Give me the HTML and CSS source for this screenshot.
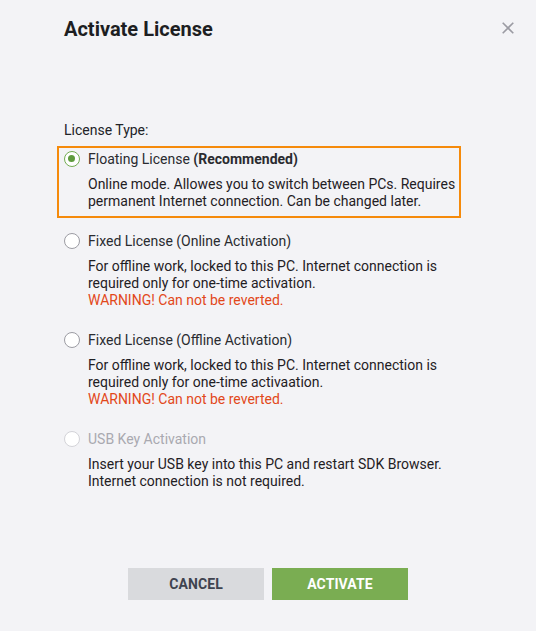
FILE: index.html
```html
<!DOCTYPE html>
<html>
<head>
<meta charset="utf-8">
<link rel="stylesheet" href="styles.css">
</head>
<body>
<div class="dialog">
  <div class="header">
    <h1 class="title">Activate License</h1>
    <button class="close" aria-label="Close">
      <svg width="12" height="12" viewBox="0 0 12 12"><path d="M0.7 0.7L11.3 11.3M11.3 0.7L0.7 11.3" stroke="#9b9ba3" stroke-width="1.6" fill="none"/></svg>
    </button>
  </div>
  <div class="content">
    <div class="type-label">License Type:</div>
    <div class="option selected">
      <div class="opt-row"><span class="radio checked"></span><span class="opt-label">Floating License <b>(Recommended)</b></span></div>
      <div class="opt-desc">Online mode. Allowes you to switch between PCs. Requires<br>permanent Internet connection. Can be changed later.</div>
    </div>
    <div class="option">
      <div class="opt-row"><span class="radio"></span><span class="opt-label">Fixed License (Online Activation)</span></div>
      <div class="opt-desc">For offline work, locked to this PC. Internet connection is<br>required only for one-time activation.<br><span class="warn">WARNING! Can not be reverted.</span></div>
    </div>
    <div class="option">
      <div class="opt-row"><span class="radio"></span><span class="opt-label">Fixed License (Offline Activation)</span></div>
      <div class="opt-desc">For offline work, locked to this PC. Internet connection is<br>required only for one-time activaation.<br><span class="warn">WARNING! Can not be reverted.</span></div>
    </div>
    <div class="option disabled">
      <div class="opt-row"><span class="radio"></span><span class="opt-label">USB Key Activation</span></div>
      <div class="opt-desc">Insert your USB key into this PC and restart SDK Browser.<br>Internet connection is not required.</div>
    </div>
  </div>
  <div class="actions">
    <button class="btn btn-cancel">CANCEL</button>
    <button class="btn btn-activate">ACTIVATE</button>
  </div>
</div>
</body>
</html>
```
FILE: styles.css
```css
html, body {
  margin: 0;
  padding: 0;
  background: #f3f3f6;
}
body {
  font-family: Roboto, "Liberation Sans", sans-serif;
  color: #222328;
  width: 536px;
  height: 631px;
  overflow: hidden;
}
.dialog {
  display: flex;
  flex-direction: column;
}
.header {
  display: flex;
  align-items: center;
  justify-content: space-between;
  padding: 15px 22px 0 64px;
  height: 28px;
}
.title {
  margin: 0;
  font-size: 20px;
  line-height: 28px;
  font-weight: 700;
  color: #1d1e22;
}
.close {
  border: none;
  background: none;
  padding: 0;
  width: 12px;
  height: 12px;
  display: flex;
  margin-top: -2px;
}
.content {
  padding: 79px 0 0 57px;
  width: 404px;
  display: flex;
  flex-direction: column;
  gap: 10px;
}
.type-label {
  font-size: 14px;
  line-height: 16px;
  padding-left: 7px;
  margin-bottom: -2px;
}
.option {
  border: 2px solid transparent;
  padding: 1px 5px 6px 5px;
}
.option.selected {
  border-color: #f58a0b;
}
.opt-row {
  display: flex;
  align-items: center;
  gap: 8px;
  height: 20px;
  font-size: 14px;
}
.opt-label {
  color: #2a2b30;
}
.opt-label b {
  font-weight: 700;
}
.radio {
  width: 16px;
  height: 16px;
  box-sizing: border-box;
  border-radius: 50%;
  border: 1px solid #9c9ca3;
  background: #fff;
  flex: none;
  position: relative;
}
.radio.checked {
  border: 1.5px solid #73ac52;
}
.radio.checked::after {
  content: "";
  position: absolute;
  left: 3px;
  top: 3px;
  width: 7px;
  height: 7px;
  border-radius: 50%;
  background: #5f9b3e;
}
.disabled .radio {
  border-color: #d3d3d8;
}
.disabled .opt-label {
  color: #a9a9b0;
}
.opt-desc {
  margin-top: 7px;
  padding-left: 24px;
  font-size: 14px;
  line-height: 17px;
  color: #1f2024;
  white-space: nowrap;
}
.warn {
  color: #e2481a;
}
.actions {
  display: flex;
  justify-content: center;
  gap: 8px;
  margin-top: 70px;
}
.btn {
  width: 136px;
  height: 32px;
  border: none;
  font-family: Roboto, "Liberation Sans", sans-serif;
  font-size: 14px;
  font-weight: 700;
  letter-spacing: 0.1px;
  cursor: pointer;
}
.btn-cancel {
  background: #d9dadd;
  color: #3f434f;
}
.btn-activate {
  background: #7aad52;
  color: #ffffff;
}
```
